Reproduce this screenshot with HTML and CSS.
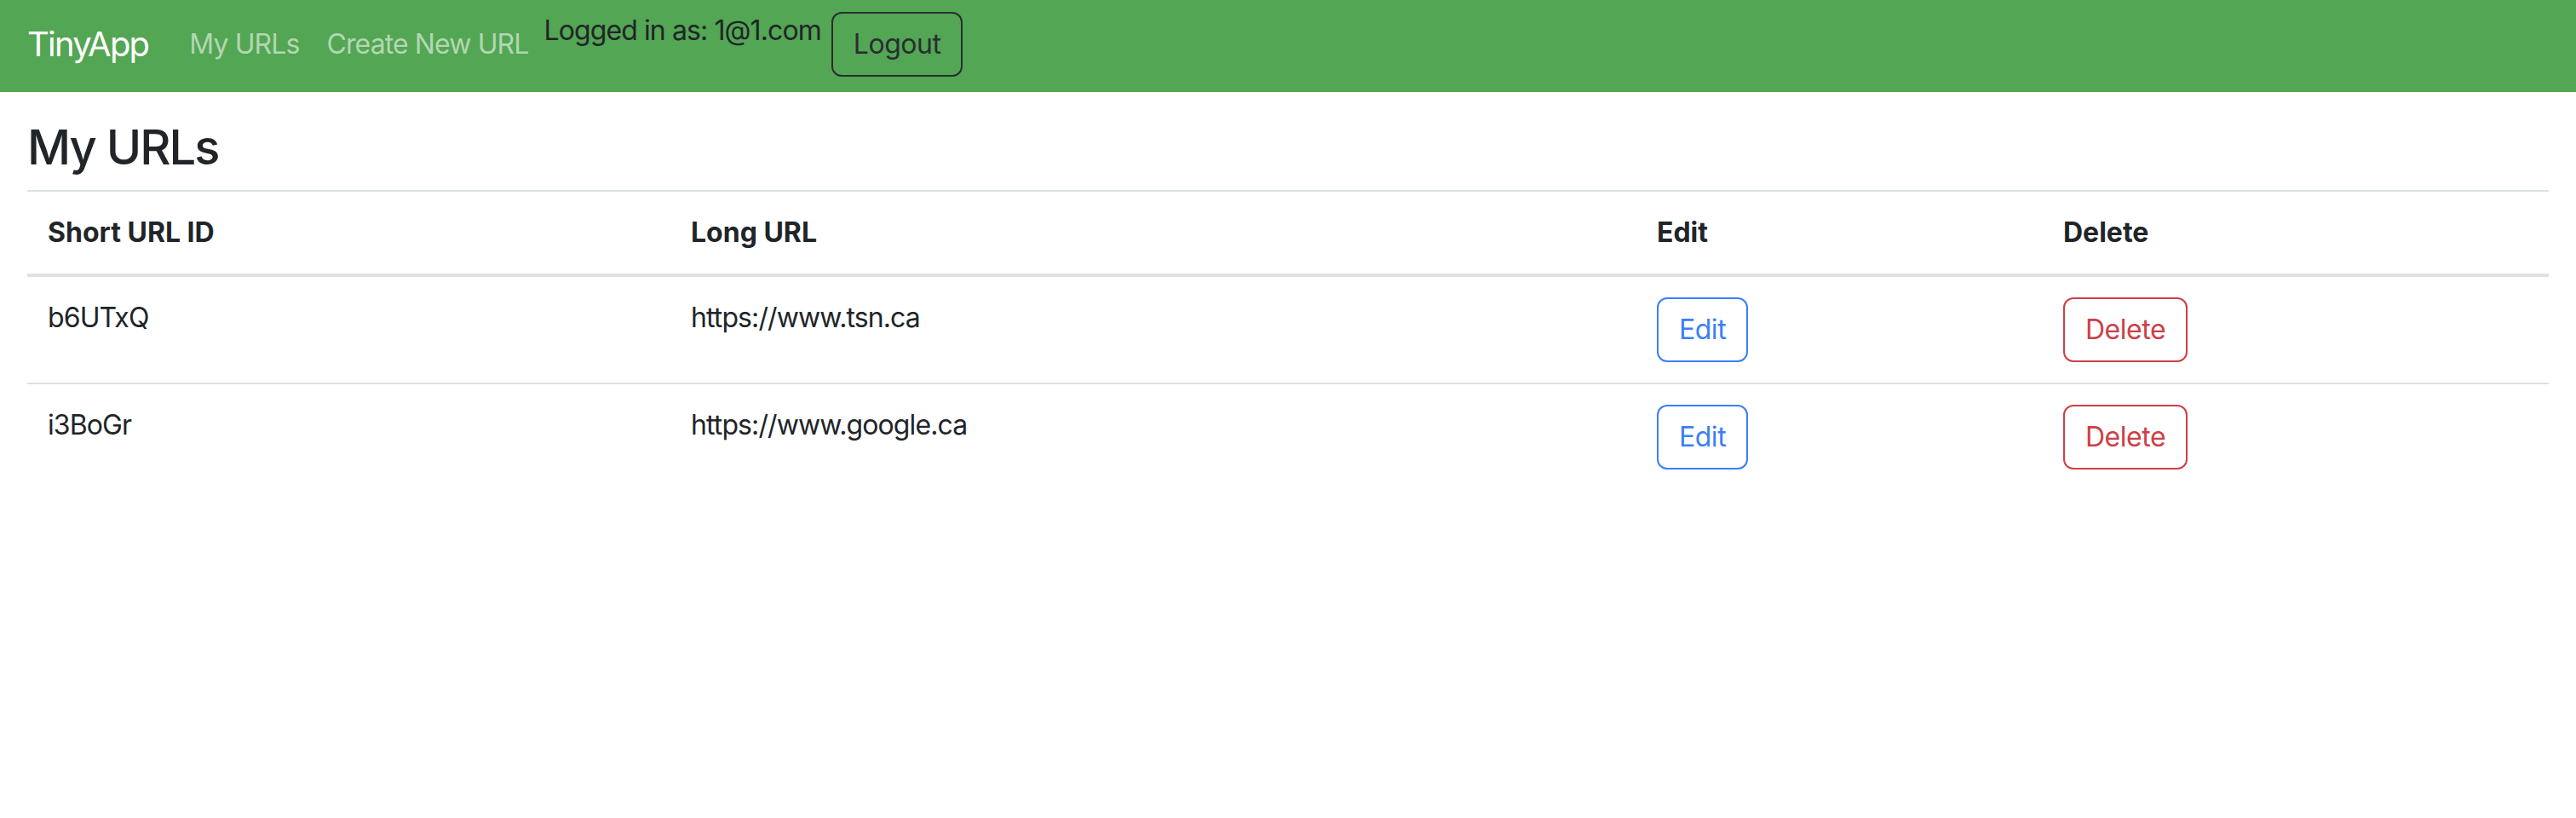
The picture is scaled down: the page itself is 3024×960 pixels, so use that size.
FILE: index.html
```html
<!DOCTYPE html>
<html lang="en">
<head>
<meta charset="utf-8">
<title>TinyApp</title>
<link rel="stylesheet" href="styles.css">
</head>
<body>
<nav class="navbar">
  <a class="brand" href="#">TinyApp</a>
  <a class="nav-link" href="#">My URLs</a>
  <a class="nav-link" href="#">Create New URL</a>
  <span class="user">Logged in as: 1@1.com</span>
  <form class="logout-form">
    <button type="button" class="btn btn-dark-outline">Logout</button>
  </form>
</nav>
<main class="page">
  <h1 class="title">My URLs</h1>
  <table class="url-table">
    <colgroup>
      <col class="col-id">
      <col class="col-long">
      <col class="col-edit">
      <col class="col-delete">
    </colgroup>
    <thead>
      <tr>
        <th>Short URL ID</th>
        <th>Long URL</th>
        <th>Edit</th>
        <th>Delete</th>
      </tr>
    </thead>
    <tbody>
      <tr>
        <td>b6UTxQ</td>
        <td>https://www.tsn.ca</td>
        <td><button type="button" class="btn btn-blue-outline">Edit</button></td>
        <td><button type="button" class="btn btn-red-outline">Delete</button></td>
      </tr>
      <tr>
        <td>i3BoGr</td>
        <td>https://www.google.ca</td>
        <td><button type="button" class="btn btn-blue-outline">Edit</button></td>
        <td><button type="button" class="btn btn-red-outline">Delete</button></td>
      </tr>
    </tbody>
  </table>
</main>
</body>
</html>
```
FILE: styles.css
```css
* { box-sizing: border-box; }

html, body {
  margin: 0;
  padding: 0;
  background: #ffffff;
}

body {
  font-family: Inter, "Noto Sans", "Liberation Sans", sans-serif;
  font-size: 32px;
  line-height: 48px;
  letter-spacing: -0.028em;
  color: #212529;
}

.navbar {
  display: flex;
  align-items: center;
  height: 108px;
  padding: 14px 32px 18px 32px;
  background: #53a653;
}

.brand {
  font-size: 40px;
  line-height: 60px;
  letter-spacing: -0.045em;
  color: #ffffff;
  text-decoration: none;
  margin-right: 32px;
}

.nav-link {
  padding: 0 16px;
  color: #b2d7b2;
  text-decoration: none;
}

.user {
  align-self: flex-start;
  margin-top: -2px;
  margin-left: 2px;
  color: #212529;
}

.logout-form {
  margin: 0 0 0 12px;
  display: flex;
}

.btn {
  font-family: inherit;
  font-size: 32px;
  line-height: 48px;
  letter-spacing: -0.015em;
  padding: 12px 24px;
  border-radius: 12px;
  border: 2px solid;
  background: transparent;
  cursor: pointer;
}

.btn-dark-outline {
  color: #2a2e33;
  border-color: #2a2e33;
}

.btn-blue-outline {
  color: #3b7ff5;
  border-color: #3b7ff5;
}

.btn-red-outline {
  color: #cd4048;
  border-color: #cd4048;
}

.page {
  padding: 32px 32px 0 32px;
}

.title {
  margin: 0 0 16px 0;
  font-size: 56px;
  line-height: 67px;
  font-weight: 500;
  letter-spacing: -0.035em;
}

.url-table {
  width: 100%;
  table-layout: fixed;
  border-collapse: collapse;
  border-top: 2px solid #dee2e6;
}

.col-id { width: 755px; }
.col-long { width: 1134px; }
.col-edit { width: 477px; }
.col-delete { width: 594px; }

.url-table th,
.url-table td {
  text-align: left;
  vertical-align: top;
  padding: 24px;
}

.url-table th {
  font-weight: 700;
  letter-spacing: 0;
  border-bottom: 4px solid #dee2e6;
}

.url-table tbody tr:not(:last-child) td {
  border-bottom: 2px solid #dee2e6;
}
```
